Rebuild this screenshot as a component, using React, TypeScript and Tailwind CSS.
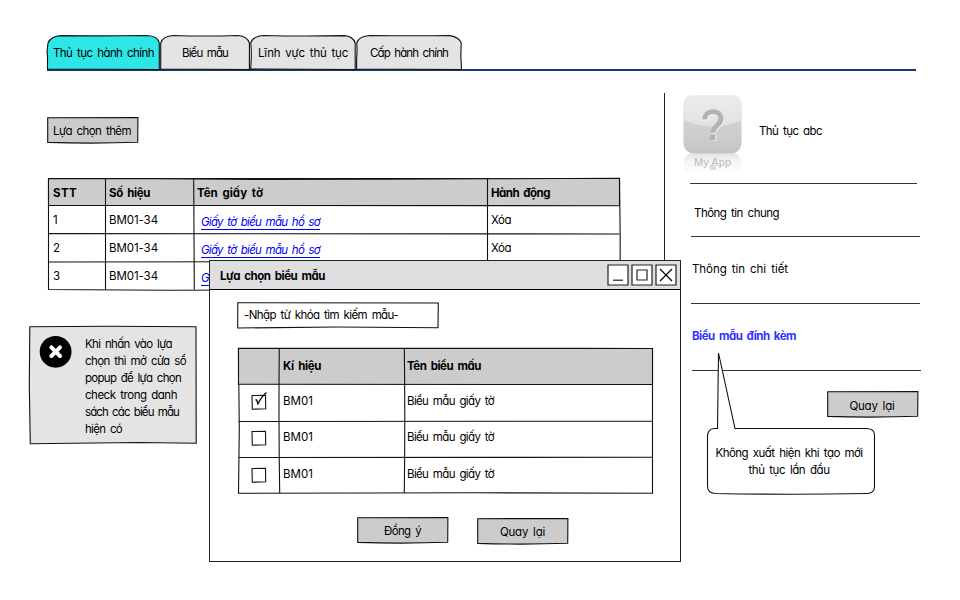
import { useLayoutEffect, useRef } from "react";
import type { ReactNode } from "react";

type LabelProps = { children: string; w: number; className?: string };

/* Single-line label whose tracking is tuned so the text fills w pixels. */
function Label({ children, w, className = "" }: LabelProps) {
  const ref = useRef<HTMLSpanElement>(null);
  useLayoutEffect(() => {
    const el = ref.current;
    if (!el) return;
    el.style.letterSpacing = "0px";
    const natural = el.getBoundingClientRect().width;
    el.style.letterSpacing = `${(w - natural) / children.length}px`;
  }, [children, w]);
  return (
    <span ref={ref} className={`inline-block whitespace-nowrap [word-spacing:2px] ${className}`}>
      {children}
    </span>
  );
}

type SketchProps = { paths: string[]; fill?: string; head?: string };

/* Hand-drawn outline behind a box; the first path is the filled shape, head an optional shaded band. */
function Sketch({ paths, fill = "none", head }: SketchProps) {
  return (
    <svg className="pointer-events-none absolute top-0 left-0 -z-10 h-full w-full overflow-visible" fill="none" stroke="#111" strokeWidth="1.1">
      {paths.map((d, i) => (
        <path key={d} d={d} fill={i === 0 ? fill : d === head ? "#cccccc" : "none"} />
      ))}
    </svg>
  );
}

function Button({ label, w, className = "", top = "" }: { label: string; w: number; className?: string; top?: string }) {
  return (
    <button className={`relative isolate flex h-[26px] w-[91px] items-center justify-center ${className}`}>
      <Sketch fill="#cccccc" paths={["M.7 .7L90.900 .6L90.700 25.300Q45 26.800 .7 25.400Z"]} />
      <Label w={w} className={top}>{label}</Label>
    </button>
  );
}

const tabs = [
  { label: "Thủ tục hành chính", w: 101, box: "w-[113px]", fill: "#2fe6e6", d: "M.5 34V22Q-.5 16 1 8Q4 1 14 .6Q56 1.2 100 .5Q111 1 112.3 8V34.5Z" },
  { label: "Biểu mẫu", w: 46, box: "w-[90px]", fill: "#e4e4e4", d: "M.7 34V8Q3 1 13 .5Q44 1.5 78 .5Q87 1 89.4 8V34.5Z" },
  { label: "Lĩnh vực thủ tục", w: 90, box: "w-[106px]", fill: "#e4e4e4", d: "M.6 34Q2 18 .7 8Q3 1 14 .5Q53 1.5 94 .6Q103 1 105.2 8V34.5Z" },
  { label: "Cấp hành chính", w: 78, box: "w-[106px]", fill: "#e4e4e4", d: "M.6 34V24Q1.5 14 .7 8Q3 1 14 .5Q53 1 94 .6Q103 2 105.2 8Q104.4 20 105.5 34.5Z" },
];

function Tabs() {
  return (
    <nav className="mt-[35px] ml-[47px] flex h-[36px] w-[869px] border-b-2 border-[#183579]">
      {tabs.map((t) => (
        <div key={t.label} className={`relative isolate flex h-[35px] shrink-0 items-center justify-center ${t.box}`}>
          <Sketch fill={t.fill} paths={[t.d]} />
          <Label w={t.w} className="mt-px">{t.label}</Label>
        </div>
      ))}
    </nav>
  );
}

const documentHead = "M.5 .5L110 .6L210 1.5L340 1.3L440 .8L571.5 .3V27.7L.5 27.4Z";

function DocumentTable() {
  return (
    <div className="relative isolate mt-[35px] ml-[48px] h-[113px] w-[572px]">
      <Sketch
        fill="white"
        head={documentHead}
        paths={[
          "M.5 .5L571.5 .5L572.2 60L572 111.8L280 111.8L120 112.3L.5 111.5Z",
          documentHead,
          "M57.5 .5V111.5",
          "M145.7 .5Q146.2 60 146.3 111.5",
          "M439.5 .5V111",
          "M.5 55.6L571.5 56",
          "M.5 84L220 83.8",
        ]}
      />
      <div className="grid grid-cols-[57px_89px_293px_133px]">
        <div className="col-span-4 grid h-[28px] grid-cols-subgrid items-center pt-[2px] font-bold">
          <span className="pl-[5px]"><Label w={24}>STT</Label></span>
          <span className="pl-1"><Label w={41}>Số hiệu</Label></span>
          <span className="pl-[3px]"><Label w={66}>Tên giấy tờ</Label></span>
          <span className="pl-1"><Label w={59}>Hành động</Label></span>
        </div>
        {["1", "2", "3"].map((n) => (
          <div key={n} className="col-span-4 grid h-7 grid-cols-subgrid items-center pb-px">
            <span className="pl-[5px]">{n}</span>
            <span className="pl-1"><Label w={49}>BM01-34</Label></span>
            <a className="mt-[4px] pl-[7px] text-[#0000f4]">
              <Label w={119} className="border-b border-[#0000ff] leading-[14px] italic">Giấy tờ biểu mẫu hồ sơ</Label>
            </a>
            <span className="pl-1"><Label w={20}>Xóa</Label></span>
          </div>
        ))}
      </div>
    </div>
  );
}

const noteLines: [string, number][] = [
  ["Khi nhấn vào lựa", 87],
  ["chọn thì mở cửa sổ", 101],
  ["popup để lựa chọn", 96],
  ["check trong danh", 92],
  ["sách các biểu mẫu", 94],
  ["hiện có", 37],
];

function Note() {
  return (
    <aside className="relative isolate mt-[35px] ml-[29px] flex h-[118px] w-[168px] pt-[9px] pl-[10px]">
      <Sketch fill="#e4e4e4" paths={["M.8 .7Q84 -.2 167 .8L167.2 117.3L110 116.5L1.3 117.7L.3 60Z"]} />
      <svg width="34" height="34" viewBox="0 0 34 34" className="shrink-0">
        <circle cx="16.6" cy="16.8" r="15.9" fill="#000" />
        <path d="M12.4 12.4L21 21M21 12.4L12.4 21" stroke="#fff" strokeWidth="4" strokeLinecap="round" />
      </svg>
      <div className="mt-px ml-[12px] flex flex-col leading-[17px]">
        {noteLines.map(([text, w]) => (
          <Label key={text} w={w} className="self-start">{text}</Label>
        ))}
      </div>
    </aside>
  );
}

function AppIcon() {
  return (
    <svg width="60" height="80" viewBox="0 0 60 80" className="shrink-0">
      <defs>
        <linearGradient id="tile" x2="0" y2="1">
          <stop stopColor="#d9d9d9" />
          <stop offset=".65" stopColor="#cecece" />
          <stop offset="1" stopColor="#c4c4c4" />
        </linearGradient>
        <linearGradient id="gloss" x2="0" y2="1">
          <stop stopColor="#ededed" />
          <stop offset="1" stopColor="#e1e1e1" />
        </linearGradient>
        <linearGradient id="mirror" x2="0" y2="1">
          <stop stopColor="#e3e3e3" />
          <stop offset=".5" stopColor="#f5f5f5" />
          <stop offset="1" stopColor="#fbfbfb" />
        </linearGradient>
      </defs>
      <path d="M1 77V67Q2 60 10 59H50Q57 60 58 67V77Z" fill="url(#mirror)" />
      <rect x=".5" y="1" width="58" height="58.500" rx="10" fill="url(#tile)" />
      <path d="M.5 26V11Q.5 1 10.500 1H48.500Q58.500 1 58.500 11V26Q30 39 .5 26Z" fill="url(#gloss)" />
      <g fill="none" strokeWidth="5">
        <path d="M22.500 26.500C22.500 16 38.500 16.500 38.500 25.500C38.500 32 30.500 33 30.500 39.500" stroke="#fafafa" />
        <path d="M21.800 25.500C21.800 15 38 15.500 38 24.500C38 31.500 29.800 32 29.800 38.800" stroke="#b3b3b3" />
      </g>
      <rect x="27.500" y="41" width="6" height="6" fill="#fafafa" />
      <rect x="27" y="40.800" width="5.500" height="5.700" fill="#b3b3b3" />
      <rect x="27" y="71" width="6" height="5" fill="#dedede" />
      <text x="11" y="72" fontFamily="Liberation Sans, Arial, sans-serif" fontSize="11" fill="#bdb8c4" textLength="37">My App</text>
    </svg>
  );
}

function Sidebar() {
  return (
    <aside className="mt-[22px] ml-[44px] h-[330px] w-[258px] border-l border-[#222]">
      <div className="flex h-[89px] pt-[1px] pl-[18px]">
        <AppIcon />
        <div className="mt-[29px] ml-[16px]"><Label w={63}>Thủ tục abc</Label></div>
      </div>
      <hr className="mt-[1px] ml-[25px] w-[227px] border-[#333]" />
      <div className="ml-[29px] flex h-[52px] items-end pb-[15px]"><Label w={85}>Thông tin chung</Label></div>
      <hr className="ml-[26px] w-[229px] border-[#333]" />
      <div className="ml-[27px] flex h-[66px] items-center pb-[2px]"><Label w={96}>Thông tin chi tiết</Label></div>
      <hr className="ml-[26px] w-[229px] border-[#333]" />
      <div className="ml-[27px] flex h-[66px] items-center pb-[2px] font-bold text-[#3333ff]"><Label w={104}>Biểu mẫu đính kèm</Label></div>
      <hr className="ml-[27px] w-[229px] border-[#333]" />
      <div className="mt-[20px] ml-[162px]"><Button label="Quay lại" w={45} top="mt-[4px] -ml-px" /></div>
    </aside>
  );
}

function WindowButton({ children }: { children: ReactNode }) {
  return (
    <svg width="22" height="22" viewBox="0 0 22 22" fill="none" stroke="#222" strokeWidth="1.200">
      <path d="M1 1H21V21H1Z" fill="#fff" />
      {children}
    </svg>
  );
}

function TitleBar() {
  return (
    <header className="flex h-[28px] items-center bg-[#dedede] pl-[10px]">
      <Label w={105} className="mt-[2px] font-bold">Lựa chọn biểu mẫu</Label>
      <div className="mr-[3px] ml-auto flex gap-[2px]">
        <WindowButton><path d="M6 16.200H16" /></WindowButton>
        <WindowButton><path d="M6 6H16V16H6Z" /></WindowButton>
        <WindowButton><path d="M5 5L17 17M17 5L5 17" stroke="#000" /></WindowButton>
      </div>
    </header>
  );
}

function Checkbox({ checked }: { checked: boolean }) {
  return (
    <svg width="18" height="18" viewBox="0 0 18 18" fill="none" stroke="#111" strokeWidth="1.100" className="-mt-[2px] overflow-visible">
      <path d="M2 2.500L15.500 2.300L15.700 15.800L2.300 16.200Z" />
      {checked && <path d="M5.500 6.500Q7.500 7 7.700 11.500Q11 4 16.500 -.5" strokeWidth="1.300" />}
    </svg>
  );
}

const formHead = "M.5 .5H414.500V36.500Q200 37.200 .5 36.300Z";

function FormTable() {
  return (
    <div className="relative isolate mt-[20px] ml-[28px] w-[415px]">
      <Sketch
        fill="white"
        head={formHead}
        paths={[
          "M.4 .4L200 .3L340 .4L414.500 .5V145.300L240 144.800L.5 145.300L1.300 80Z",
          formHead,
          "M41.300 .5Q40.500 70 41.700 145",
          "M166.300 .5Q167.300 70 166.300 145",
          "M.5 73.500L414.500 73.200",
          "M.5 109.500L414.500 109.300",
        ]}
      />
      <div className="grid grid-cols-[41px_125px_249px] [&>*]:col-span-3 [&>*]:grid [&>*]:grid-cols-subgrid [&>*]:items-center">
        <div className="h-[37px] pb-px font-bold">
          <span />
          <span className="pl-[4px]"><Label w={38}>Kí hiệu</Label></span>
          <span className="pl-[3px]"><Label w={74}>Tên biểu mấu</Label></span>
        </div>
        {[true, false, false].map((checked, i) => (
          <div key={i} className={i === 2 ? "h-[37px]" : "h-[36px]"}>
            <span className="pl-[12px]"><Checkbox checked={checked} /></span>
            <span className="-mt-[4px] pl-1"><Label w={30}>BM01</Label></span>
            <span className="-mt-[4px] pl-[3px]"><Label w={87}>Biểu mẫu giấy tờ</Label></span>
          </div>
        ))}
      </div>
    </div>
  );
}

function Dialog() {
  return (
    <section className="absolute top-[260px] left-[209px] h-[302px] w-[472px] border border-[#222] bg-white">
      <TitleBar />
      <div className="border-t border-black pt-[12px]">
        <div className="relative isolate ml-[27px] flex h-[26px] w-[202px] items-center pl-[7px]">
          <Sketch fill="white" paths={["M.8 .8L201.300 1L201 25.700L100 25L.7 26Z"]} />
          <Label w={154} className="-mt-px">-Nhập từ khóa tìm kiếm mẫu-</Label>
        </div>
        <FormTable />
        <footer className="mt-[23px] ml-[147px] flex gap-[29px]">
          <Button label="Đồng ý" w={37} top="mt-[2px]" />
          <Button label="Quay lại" w={45} top="mt-[2px]" className="translate-y-px" />
        </footer>
      </div>
    </section>
  );
}

function Callout() {
  return (
    <div className="absolute top-[352px] left-[707px] isolate h-[142px] w-[169px]">
      <Sketch
        fill="white"
        paths={["M10.500 76.500L11.500 1L28 76.500H160Q167.500 77 167.500 83V135Q167 141.500 160 141.500Q84 143 8 141.500Q.5 141 .5 134V84Q1 77 7 76.500Z"]}
      />
      <div className="flex flex-col items-center pt-[93px] pr-[5px] leading-[17px]">
        <Label w={147}>Không xuất hiện khi tạo mới</Label>
        <Label w={81}>thủ tục lần đầu</Label>
      </div>
    </div>
  );
}

export default function App() {
  return (
    <main className="relative flex h-[600px] w-[960px] flex-col overflow-hidden bg-white font-[Inter,'Noto_Sans',sans-serif] text-[11.5px] leading-4 text-black [font-feature-settings:'cv11']">
      <Tabs />
      <div className="flex">
        <div className="w-[620px] shrink-0 pt-[46px]">
          <Button label="Lựa chọn thêm" w={78} className="ml-[47px]" top="mt-[2px] -ml-[1px]" />
          <DocumentTable />
          <Note />
        </div>
        <Sidebar />
      </div>
      <Dialog />
      <Callout />
    </main>
  );
}
